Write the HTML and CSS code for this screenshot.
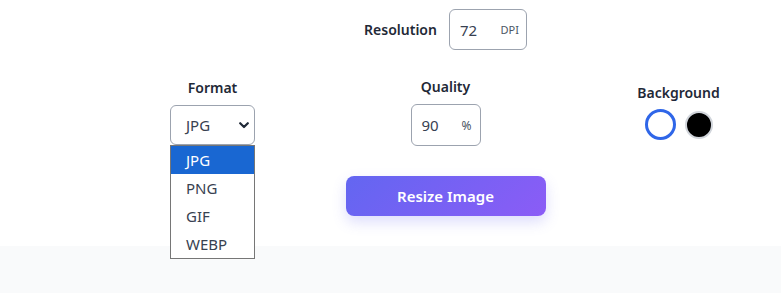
FILE: index.html
```html
<!DOCTYPE html>
<html>
<head>
  <meta charset="UTF-8">
  <title>Image Resizer – Output Settings</title>
  <link rel="stylesheet" href="styles.css">
</head>
<body>
  <div class="settings">
    <div class="wrap">
      <div class="res-row">
        <span class="label">Resolution</span>
        <div class="field res-field">
          <span class="value">72</span>
          <span class="unit">DPI</span>
        </div>
      </div>

      <div class="options">
        <div class="col">
          <span class="label">Format</span>
          <div class="select-box">
            <div class="select">
              <span class="value">JPG</span>
              <svg class="chevron" width="10" height="7" viewBox="0 0 10 7"><path d="M1.2 1.2 L5 5 L8.8 1.2" fill="none" stroke="#1f2937" stroke-width="2.2" stroke-linecap="round" stroke-linejoin="round"/></svg>
            </div>
            <ul class="menu">
              <li class="picked">JPG</li>
              <li>PNG</li>
              <li>GIF</li>
              <li>WEBP</li>
            </ul>
          </div>
        </div>

        <div class="col">
          <span class="label">Quality</span>
          <div class="field quality-field">
            <span class="value">90</span>
            <span class="unit pct">%</span>
          </div>
        </div>

        <div class="col bg-col">
          <span class="label">Background</span>
          <div class="swatches">
            <span class="swatch white active"></span>
            <span class="swatch black"></span>
          </div>
        </div>
      </div>

      <div class="actions">
        <button type="button" class="resize-btn">Resize Image</button>
      </div>
    </div>
  </div>
  <div class="footer"></div>
</body>
</html>
```

FILE: styles.css
```css
body { margin: 0; overflow: hidden; font-family: "Noto Sans", "Open Sans", Arial, sans-serif; color: #1f2937; background: #fff; }
.settings { padding: 9px 0 30px; background: #fff; }
.wrap { margin-left: 96px; width: 699px; }
.label { font-size: 14px; font-weight: 600; line-height: 20px; color: #1f2937; }

.res-row { display: flex; justify-content: center; align-items: center; gap: 12px; }
.field { box-sizing: border-box; display: flex; align-items: center; justify-content: space-between; border: 1px solid #9ca3af; border-radius: 6px; background: #fff; }
.field .value { font-size: 15px; color: #374151; }
.field .unit { font-size: 11px; color: #4b5563; }
.res-field { width: 78px; height: 41px; padding: 0 7px 0 10px; }
.quality-field { width: 70px; height: 42px; padding: 0 8px 0 10px; }
.unit.pct { font-size: 12px; }

.options { display: grid; grid-template-columns: repeat(3, 233px); align-items: center; margin-top: 27px; }
.col { display: flex; flex-direction: column; align-items: center; gap: 7px; }
.bg-col { gap: 6px; }

.select-box { position: relative; width: 85px; }
.select { box-sizing: border-box; height: 40px; display: flex; align-items: center; justify-content: space-between; padding: 0 5px 0 15px; border: 1px solid #9ca3af; border-radius: 6px; }
.select .value { font-size: 15px; color: #374151; }
.menu { position: absolute; top: 40px; left: 0; width: 85px; box-sizing: border-box; margin: 0; padding: 0; list-style: none; background: #fff; border: 1px solid #767676; z-index: 5; }
.menu li { height: 28px; line-height: 28px; padding-left: 15px; font-size: 15px; color: #374151; }
.menu li.picked { background: #1967d2; color: #fff; }

.swatches { display: flex; align-items: center; gap: 9px; }
.swatch { box-sizing: border-box; border-radius: 50%; }
.swatch.white { width: 31px; height: 31px; background: #fff; border: 3px solid #2f66e8; }
.swatch.black { width: 28px; height: 28px; background: #000; border: 2px solid #d1d5db; }

.actions { display: flex; justify-content: center; margin-top: 30px; }
.resize-btn { width: 200px; height: 40px; border: none; border-radius: 8px; background: linear-gradient(135deg, #6366f1, #8b5cf6); color: #fff; font-family: inherit; font-size: 15px; font-weight: 600; box-shadow: 0 6px 14px rgba(99, 102, 241, 0.22); cursor: pointer; }

.footer { height: 47px; background: #f9fafb; }
```
